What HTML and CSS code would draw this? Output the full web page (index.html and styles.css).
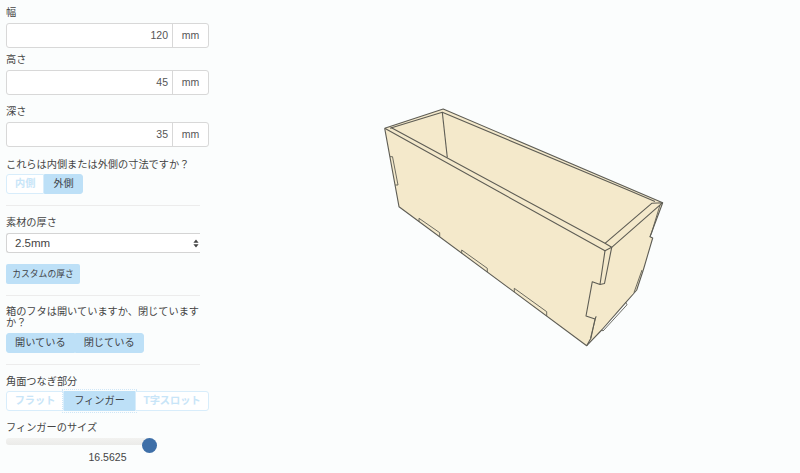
FILE: index.html
```html
<!DOCTYPE html>
<html lang="ja">
<head>
<meta charset="utf-8">
<title>箱</title>
<link rel="stylesheet" href="styles.css">
</head>
<body>
<div class="page">
  <aside class="side">
    <div class="label">幅</div>
    <div class="field"><div class="value">120</div><div class="unit">mm</div></div>
    <div class="label l-high">高さ</div>
    <div class="field"><div class="value">45</div><div class="unit">mm</div></div>
    <div class="label l-deep">深さ</div>
    <div class="field"><div class="value">35</div><div class="unit">mm</div></div>
    <div class="label l-q">これらは内側または外側の寸法ですか？</div>
    <div class="group">
      <div class="btn off">内側</div>
      <div class="btn on">外側</div>
    </div>
    <div class="rule"></div>
    <div class="label l-after">素材の厚さ</div>
    <div class="select">
      <span>2.5mm</span>
      <svg class="arrows" width="6" height="9" viewBox="0 0 6 9"><path d="M3 0.5 5.6 3.7H0.4ZM3 8.5 0.4 5.3H5.6Z"/></svg>
    </div>
    <div class="small">カスタムの厚さ</div>
    <div class="rule"></div>
    <div class="label two">箱のフタは開いていますか、閉じていますか？</div>
    <div class="group">
      <div class="btn on">開いている</div>
      <div class="btn on">閉じている</div>
    </div>
    <div class="rule"></div>
    <div class="label l-after l-tight">角面つなぎ部分</div>
    <div class="group seg">
      <div class="btn off">フラット</div>
      <div class="btn on focus">フィンガー</div>
      <div class="btn off">T字スロット</div>
    </div>
    <div class="label l-size">フィンガーのサイズ</div>
    <div class="slider"><div class="track"></div><div class="thumb"></div></div>
    <div class="sval">16.5625</div>
  </aside>
  <main class="stage">
    <svg class="box" viewBox="210 0 590 473" width="590" height="473">
      <path class="fill" d="M384.7 128.3 443.2 109 662.7 202.7 650 236.7 652.7 238 643.3 270 636.7 290 633.3 294 625 303.3 601.7 330 586.7 345.7 399 206.7Z"/>
      <!-- outline -->
      <path class="ln" d="M384.7 128.3 443.2 109 662.7 202.7"/>
      <path class="ln" d="M384.7 128.3 399 206.7 586.7 345.7 601.7 330 625 303.3 633.3 294 636.7 290 643.3 270"/>
      <path class="ln" d="M662.7 202.7 650 236.7 652.7 238 643.3 270"/>
      <!-- rims -->
      <path class="ln" d="M390 128.3 442.3 112.3 628 190 655 201.5"/>
      <path class="ln" d="M442.3 112.3 447.3 157.5"/>
      <path class="ln" d="M384.7 128.3 605 250.7 611.7 247.3 605 243.3 391 127.5"/>
      <path class="ln" d="M605 243.3 651.7 203.3 662.7 202.7 611.7 247.3"/>
      <!-- front panel edge and finger -->
      <path class="ln" d="M605 250.7 600 284.5 592.3 281.7 586 316 595 319 591 338 586.7 345.7"/>
      <path class="ln" d="M611.7 247.3 604.5 283.5 600 284.5"/>
      <path class="ln thin" d="M595 319 596 316.5 590.5 338"/>
      <!-- right panel slots -->
      <path class="ln thin" d="M660 205 651.5 233 650 236.7"/>
      <path class="ln thin" d="M642 270 634 292.5"/>
      <path class="ln thin" d="M625.5 302 627 304.8 603 331 601.7 330"/>
      <!-- left slot -->
      <path class="ln thin" d="M390 156.7 392.5 156.7 398 185 395.2 185"/>
      <!-- bottom slots -->
      <path class="ln thin" d="M419 221.5 419 218.3 439.7 232.7 439.7 236.8"/>
      <path class="ln thin" d="M461.7 253.1 461.7 250 487.3 268.3 487.3 272"/>
      <path class="ln thin" d="M514.3 292 514.3 288.3 546.7 311.7 546.7 316"/>
    </svg>
  </main>
</div>
</body>
</html>
```
FILE: styles.css
```css
* { box-sizing: border-box; }
html, body { margin: 0; height: 100%; }
body {
  background: #fbfdfd;
  color: #444;
  font-family: "Liberation Sans", "Noto Sans CJK JP", sans-serif;
  font-size: 10.2px;
  overflow: hidden;
}
.page { display: flex; width: 800px; height: 473px; overflow: hidden; }
.side { width: 210px; flex: none; padding: 6px 1px 0 6px; }
.stage { flex: 1; }
.box { display: block; }
.fill { fill: #f4e9cb; stroke: none; }
.ln { fill: none; stroke: #5e5d55; stroke-width: 1.1; stroke-linejoin: round; }
.thin { stroke-width: 0.9; }

.label { height: 11px; line-height: 13px; margin-bottom: 6px; white-space: nowrap; }
.l-high { margin-top: 5px; }
.l-deep { margin-top: 10px; }
.l-q { margin-top: 11px; margin-bottom: 5px; }
.l-after { margin-top: 10px; }
.l-tight { margin-bottom: 5px; }
.l-size { margin-top: 10px; margin-bottom: 0; }
.two { height: 20px; line-height: 10.5px; white-space: normal; width: 196px; margin-top: 11px; margin-bottom: 6px; }

.field {
  display: flex; height: 25px;
  background: #fff;
  border: 1px solid #d8d8d8;
  border-radius: 3px;
  line-height: 23px;
  font-size: 10.5px;
}
.value { flex: 1; text-align: right; padding-right: 4px; color: #555; }
.unit { width: 36px; text-align: center; border-left: 1px solid #d8d8d8; color: #555; }

.group { display: flex; width: max-content; height: 20px; }
.btn { height: 20px; line-height: 18px; padding: 0 8px; border: 1px solid transparent; white-space: nowrap; }
.btn.on { background: #bde0f7; border-color: #bde0f7; color: #3f4347; }
.btn.off { background: #fff; border-color: #d8edfb; color: #c8e5f8; font-weight: bold; }
.btn:first-child { border-radius: 3px 0 0 3px; }
.btn:last-child { border-radius: 0 3px 3px 0; }
.seg { width: 203px; }
.seg .btn { flex: none; text-align: center; padding: 0; }
.seg .btn:nth-child(1) { width: 58px; }
.seg .btn:nth-child(2) { width: 71px; }
.seg .btn:nth-child(3) { width: 74px; }
.focus { outline: 1px dotted #cfe7f8; outline-offset: 1px; }

.rule { width: 194px; height: 1px; background: #ececec; margin-top: 11px; }

.select {
  display: flex; align-items: center; justify-content: space-between;
  width: 194px; height: 20px;
  padding: 0 1px 0 8px;
  background: #fff;
  border: 1px solid #d4d4d4;
  border-right: none;
  border-radius: 3px 0 0 3px;
  font-size: 11.5px;
}
.arrows { fill: #444; }
.small {
  width: 74px; height: 20px; margin-top: 11px;
  background: #bde0f7; border-radius: 2px;
  font-size: 8.8px; line-height: 20px; text-align: center;
  color: #3f4347;
}

.slider { position: relative; width: 203px; height: 15px; margin-top: 6px; }
.track {
  width: 143px; height: 7px; margin-top: 4px;
  border-radius: 3px;
  background: linear-gradient(#f2f2f0, #ebebe9);
}
.thumb {
  position: absolute; left: 135.5px; top: 0;
  width: 15px; height: 15px; border-radius: 50%;
  background: #3e6fa8;
}
.sval { width: 203px; text-align: center; line-height: 11px; margin-top: -1px; font-size: 10.5px; color: #444; }
```
